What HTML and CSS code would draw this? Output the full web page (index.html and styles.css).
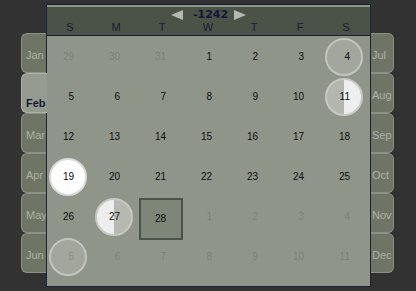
FILE: index.html
```html
<!DOCTYPE html>
<html lang="en">
<head>
    <meta charset="UTF-8">
    <meta name="viewport" content="width=device-width, initial-scale=1.0">
    <title>Date Picker</title>
    <link rel="stylesheet" href="styles.css">
</head>
<body>
    <div class="picker">
        <div class="tabs tabs-left">
            <div class="tab">Jan</div>
            <div class="tab active">Feb</div>
            <div class="tab">Mar</div>
            <div class="tab">Apr</div>
            <div class="tab">May</div>
            <div class="tab">Jun</div>
        </div>

        <div class="panel">
            <div class="head">
                <div class="year-row">
                    <svg class="arrow arrow-prev" width="12" height="10" viewBox="0 0 12 10"><polygon points="0,5 12,0 12,10"/></svg>
                    <span class="year">-1242</span>
                    <svg class="arrow arrow-next" width="12" height="10" viewBox="0 0 12 10"><polygon points="12,5 0,0 0,10"/></svg>
                </div>
                <div class="weekdays">
                    <span>S</span><span>M</span><span>T</span><span>W</span><span>T</span><span>F</span><span>S</span>
                </div>
            </div>

            <div class="days">
                <div class="cell"><span class="d other">29</span></div>
                <div class="cell"><span class="d other">30</span></div>
                <div class="cell"><span class="d other">31</span></div>
                <div class="cell"><span class="d">1</span></div>
                <div class="cell"><span class="d">2</span></div>
                <div class="cell"><span class="d">3</span></div>
                <div class="cell"><span class="d ring">4</span></div>

                <div class="cell"><span class="d">5</span></div>
                <div class="cell"><span class="d">6</span></div>
                <div class="cell"><span class="d">7</span></div>
                <div class="cell"><span class="d">8</span></div>
                <div class="cell"><span class="d">9</span></div>
                <div class="cell"><span class="d">10</span></div>
                <div class="cell"><span class="d half-end">11</span></div>

                <div class="cell"><span class="d">12</span></div>
                <div class="cell"><span class="d">13</span></div>
                <div class="cell"><span class="d">14</span></div>
                <div class="cell"><span class="d">15</span></div>
                <div class="cell"><span class="d">16</span></div>
                <div class="cell"><span class="d">17</span></div>
                <div class="cell"><span class="d">18</span></div>

                <div class="cell"><span class="d full">19</span></div>
                <div class="cell"><span class="d">20</span></div>
                <div class="cell"><span class="d">21</span></div>
                <div class="cell"><span class="d">22</span></div>
                <div class="cell"><span class="d">23</span></div>
                <div class="cell"><span class="d">24</span></div>
                <div class="cell"><span class="d">25</span></div>

                <div class="cell"><span class="d">26</span></div>
                <div class="cell"><span class="d half-start">27</span></div>
                <div class="cell"><span class="d today">28</span></div>
                <div class="cell"><span class="d other">1</span></div>
                <div class="cell"><span class="d other">2</span></div>
                <div class="cell"><span class="d other">3</span></div>
                <div class="cell"><span class="d other">4</span></div>

                <div class="cell"><span class="d other ring">5</span></div>
                <div class="cell"><span class="d other">6</span></div>
                <div class="cell"><span class="d other">7</span></div>
                <div class="cell"><span class="d other">8</span></div>
                <div class="cell"><span class="d other">9</span></div>
                <div class="cell"><span class="d other">10</span></div>
                <div class="cell"><span class="d other">11</span></div>
            </div>
        </div>

        <div class="tabs tabs-right">
            <div class="tab">Jul</div>
            <div class="tab">Aug</div>
            <div class="tab">Sep</div>
            <div class="tab">Oct</div>
            <div class="tab">Nov</div>
            <div class="tab">Dec</div>
        </div>
    </div>
</body>
</html>
```

FILE: styles.css
```css
body {
    margin: 0;
    background-color: #323232;
    font-family: "Liberation Sans", Arial, sans-serif;
}
.picker {
    display: flex;
    align-items: flex-start;
    padding: 4px 0 0 21px;
}

/* month tabs */
.tabs {
    display: flex;
    flex-direction: column;
    margin-top: 29px;
}
.tab {
    box-sizing: border-box;
    height: 40px;
    width: 25px;
    display: flex;
    align-items: center;
    padding-top: 4px;
    overflow: hidden;
    white-space: nowrap;
    background-color: #6e7564;
    border: 1px solid #8c9186;
    color: #adb1a6;
    font-size: 11px;
}
.tabs-left .tab {
    border-right: none;
    border-radius: 6px 0 0 6px;
    padding-left: 4px;
}
.tabs-right .tab {
    width: 23px;
    border-left: none;
    border-radius: 0 6px 6px 0;
    padding-left: 1px;
}
.tabs-left .tab.active {
    position: relative;
    z-index: 1;
    width: 26px;
    margin-right: -1px;
    padding-top: 20px;
    background-color: #959b8e;
    border-color: #aeb2a8;
    color: #16193a;
    font-weight: bold;
}

/* calendar panel */
.panel {
    width: 323px;
    border: 1px solid #1d203c;
    background-color: #8f9689;
    padding-bottom: 9px;
}
.head {
    height: 28px;
    background-color: #4a5345;
    border-bottom: 1px solid #1d203c;
}
.year-row {
    height: 15px;
    margin-top: 2px;
    display: flex;
    align-items: center;
    justify-content: center;
}
.arrow {
    fill: #b6bab1;
}
.arrow-prev {
    margin-right: 10px;
}
.arrow-next {
    margin-left: 6px;
}
.year {
    font-family: "DejaVu Sans", Verdana, sans-serif;
    font-weight: bold;
    font-size: 11px;
    color: #14173a;
}
.weekdays {
    display: grid;
    grid-template-columns: repeat(7, 46px);
    height: 11px;
    line-height: 11px;
    font-size: 11px;
    color: #191c3a;
    text-align: center;
}

.days {
    display: grid;
    grid-template-columns: repeat(7, 46px);
    grid-auto-rows: 40px;
    padding-top: 1px;
}
.cell {
    display: flex;
    align-items: center;
}
.d {
    box-sizing: border-box;
    width: 38px;
    height: 38px;
    margin-left: 2px;
    padding-right: 11px;
    border: 2px solid transparent;
    border-radius: 50%;
    line-height: 34px;
    text-align: right;
    font-size: 10px;
    color: #0c0c0c;
}
.d.other {
    color: #7c8277;
}
.d.ring {
    background-color: #a2a69c;
    border-color: #c2c5bd;
}
.d.other.ring {
    color: #8a8f85;
}
.d.full {
    background-color: #fdfdfd;
    border-color: #dadada;
}
.d.half-end {
    background: linear-gradient(to right, #b3b6ae 50%, #eeeeee 50%);
    border-color: #c6c8c2;
}
.d.half-start {
    background: linear-gradient(to right, #eeeeee 50%, #b6b9b1 50%);
    border-color: #c6c8c2;
}
.d.today {
    align-self: flex-start;
    width: 44px;
    height: 42px;
    margin: 1px 0 0 0;
    padding-right: 15px;
    border: 2px solid #4d5248;
    border-radius: 0;
    background-color: #7e8678;
    line-height: 38px;
}
```
